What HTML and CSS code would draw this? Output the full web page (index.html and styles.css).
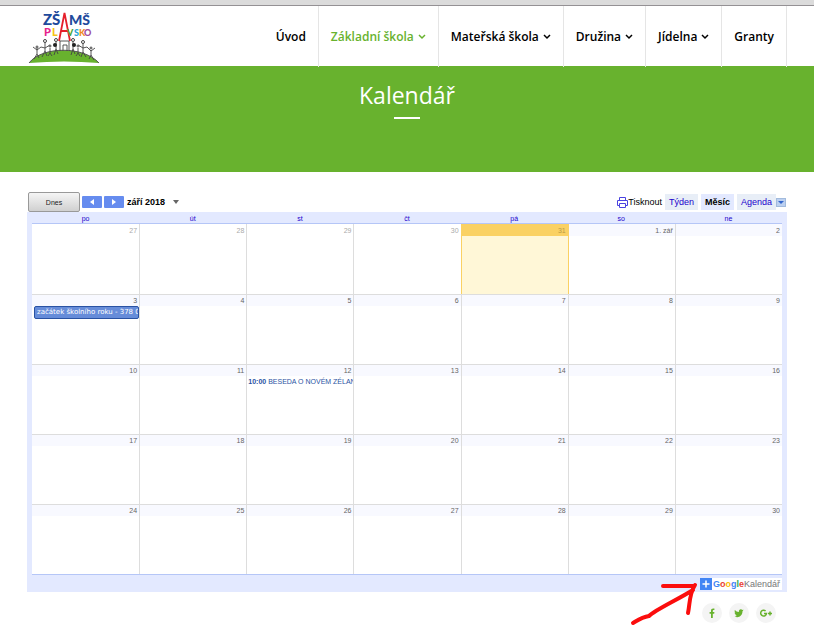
FILE: index.html
```html
<!DOCTYPE html>
<html lang="cs">
<head>
  <meta charset="UTF-8">
  <meta name="viewport" content="width=device-width, initial-scale=1.0">
  <title>Kalendář</title>
  <link rel="stylesheet" href="styles.css">
</head>
<body>
  <div class="topbar"></div>

  <header class="header">
    <div class="container header-inner">
      <a class="logo" href="#" aria-label="ZŠ a MŠ Plavsko">
        <svg width="72" height="56" viewBox="0 0 72 56">
          <path d="M1 54 C14 37 56 37 71 54 Q36 51 1 54Z" fill="#68b22e"/>
          <path d="M1 54 C14 37 56 37 71 54" fill="none" stroke="#555"/>
          <g fill="none" stroke="#444" stroke-width="0.900">
            <path d="M9 39v6l-3 5M9 45l2 4M5 38l4 3 4-3 4 1 5-3M17 33v9l-3 6M17 42l2 5M22 39v5l-2 3M22 44l2 3M28 33v7l-2 6M28 40l2 5"/>
            <path d="M63 41v5l-2 4M63 46l3 5M67 39l-4 3-4-4-4 1-5-3M55 34v9l-2 5M55 43l3 5M50 39v5l-2 3M50 44l2 3M45 33v7l-2 6M45 40l2 5"/>
            <path d="M32 42V32h9v10M35 42v-6h4v6"/>
          </g>
          <g fill="#fff" stroke="#444">
            <circle cx="9" cy="38" r="1"/><circle cx="17" cy="32" r="1.500"/><circle cx="22" cy="37" r="1"/><circle cx="28" cy="31" r="1.500"/>
            <circle cx="45" cy="31" r="1.500"/><circle cx="50" cy="37" r="1"/><circle cx="55" cy="33" r="1.500"/><circle cx="63" cy="39" r="1"/>
          </g>
          <circle cx="27" cy="36" r="2" fill="#222"/><circle cx="46" cy="36" r="2" fill="#222"/>
          <path d="M31 32L36.500 4L42 32M33 22h7" fill="none" stroke="#e5202b" stroke-width="1.800"/>
          <g class="logo-text">
            <text x="15" y="16" font-size="15" fill="#214a9c">ZŠ</text>
            <text x="41" y="16" font-size="14" fill="#214a9c">MŠ</text>
            <text x="16" y="27" font-size="11" fill="#e6238c">P</text>
            <text x="24" y="27" font-size="11" fill="#f6c416">L</text>
            <text x="39" y="27" font-size="9" fill="#4aa535">V</text>
            <text x="46" y="27" font-size="9" fill="#2ba5d8">S</text>
            <text x="51" y="27" font-size="9" fill="#f08a1d">K</text>
            <text x="56" y="27" font-size="9" fill="#a04a9c">O</text>
          </g>
        </svg>
      </a>
      <nav class="nav">
        <a href="#">Úvod</a>
        <a href="#" class="active">Základní škola <svg class="chevron" viewBox="0 0 8 6"><path d="M1 1l3 3 3-3"/></svg></a>
        <a href="#">Mateřská škola <svg class="chevron" viewBox="0 0 8 6"><path d="M1 1l3 3 3-3"/></svg></a>
        <a href="#">Družina <svg class="chevron" viewBox="0 0 8 6"><path d="M1 1l3 3 3-3"/></svg></a>
        <a href="#">Jídelna <svg class="chevron" viewBox="0 0 8 6"><path d="M1 1l3 3 3-3"/></svg></a>
        <a href="#">Granty</a>
      </nav>
    </div>
  </header>

  <section class="hero">
    <h1>Kalendář</h1>
  </section>

  <main class="container">
    <div class="toolbar">
      <button class="today-btn">Dnes</button>
      <button class="arrow-btn" aria-label="Předchozí"><svg width="4" height="6" viewBox="0 0 4 6"><path d="M4 0v6L0 3z" fill="#fff"/></svg></button>
      <button class="arrow-btn" aria-label="Další"><svg width="4" height="6" viewBox="0 0 4 6"><path d="M0 0v6l4-3z" fill="#fff"/></svg></button>
      <button class="month-btn">září 2018 <svg width="6" height="4" viewBox="0 0 6 4"><path d="M0 0h6L3 4z" fill="#666"/></svg></button>
      <div class="views">
        <a class="print" href="#"><svg width="11" height="11" viewBox="0 0 11 11" fill="none" stroke="#4a42e0"><path d="M2.500 3.500v-3h6v3M2.500 8.500h-2v-5h10v5h-2M2.500 6.500h6v4h-6z"/></svg>Tisknout</a>
        <a class="tab" href="#">Týden</a>
        <a class="tab current" href="#">Měsíc</a>
        <a class="tab" href="#">Agenda</a>
        <button class="more-btn" aria-label="Více"><svg width="6" height="3" viewBox="0 0 6 3"><path d="M0 0h6L3 3z" fill="#36c"/></svg></button>
      </div>
    </div>

    <div class="calendar">
      <table>
        <thead>
          <tr><th>po</th><th>út</th><th>st</th><th>čt</th><th>pá</th><th>so</th><th>ne</th></tr>
        </thead>
        <tbody>
          <tr>
            <td class="other"><div class="day">27</div></td>
            <td class="other"><div class="day">28</div></td>
            <td class="other"><div class="day">29</div></td>
            <td class="other"><div class="day">30</div></td>
            <td class="today"><div class="day">31</div></td>
            <td><div class="day">1. zář</div></td>
            <td><div class="day">2</div></td>
          </tr>
          <tr>
            <td><div class="day">3</div><a class="event event-all" href="#">začátek školního roku - 378 02</a></td>
            <td><div class="day">4</div></td>
            <td><div class="day">5</div></td>
            <td><div class="day">6</div></td>
            <td><div class="day">7</div></td>
            <td><div class="day">8</div></td>
            <td><div class="day">9</div></td>
          </tr>
          <tr>
            <td><div class="day">10</div></td>
            <td><div class="day">11</div></td>
            <td><div class="day">12</div><a class="event" href="#"><b>10:00</b> BESEDA O NOVÉM ZÉLANDU</a></td>
            <td><div class="day">13</div></td>
            <td><div class="day">14</div></td>
            <td><div class="day">15</div></td>
            <td><div class="day">16</div></td>
          </tr>
          <tr>
            <td><div class="day">17</div></td>
            <td><div class="day">18</div></td>
            <td><div class="day">19</div></td>
            <td><div class="day">20</div></td>
            <td><div class="day">21</div></td>
            <td><div class="day">22</div></td>
            <td><div class="day">23</div></td>
          </tr>
          <tr>
            <td><div class="day">24</div></td>
            <td><div class="day">25</div></td>
            <td><div class="day">26</div></td>
            <td><div class="day">27</div></td>
            <td><div class="day">28</div></td>
            <td><div class="day">29</div></td>
            <td><div class="day">30</div></td>
          </tr>
        </tbody>
      </table>
      <div class="calendar-footer">
        <a class="google" href="#">
          <span class="plus"><svg width="12" height="12" viewBox="0 0 12 12"><path d="M6 2.500v7M2.500 6h7" stroke="#fff" stroke-width="1.500"/></svg></span>
          <span class="google-name"><span class="blue">G</span><span class="red">o</span><span class="yellow">o</span><span class="blue">g</span><span class="green">l</span><span class="red">e</span></span>
          <span>Kalendář</span>
        </a>
        <svg class="pointer" width="70" height="48" viewBox="0 0 70 48"><path d="M4 43C9 40 13 37 20 36C26 30 48 20 64 10M34 6h31M66 5C60 14 61 24 59 33" fill="none" stroke="#fb0d0d" stroke-width="4" stroke-linecap="round" stroke-linejoin="round"/></svg>
      </div>
    </div>

    <div class="social">
      <a href="#" aria-label="Facebook"><svg width="12" height="12" viewBox="0 0 12 12"><path d="M5 11V6.700H3.600V5H5V3.800C5 2.300 5.800 1.500 7.200 1.500h1.200v1.600h-.8c-.6 0-.8.300-.8.800V5h1.600l-.2 1.700H6.800V11z"/></svg></a>
      <a href="#" aria-label="Twitter"><svg width="10" height="10" viewBox="1 1 10 10"><path d="M10.500 3.300l-1 1C9.500 8 7 10.200 4.300 10.200c-1 0-2-.3-2.800-.8 1 .1 1.900-.2 2.600-.7-.9 0-1.500-.6-1.800-1.300h.8C2.200 7.100 1.600 6.400 1.600 5.400l.8.200C1.500 4.900 1.400 3.800 1.900 3c1 1.200 2.400 1.900 4 2C5.600 3.500 6.600 2.300 7.900 2.300c.6 0 1.100.2 1.400.6l1.200-.4-.7 1z"/></svg></a>
      <a href="#" aria-label="Google Plus"><svg width="14" height="12" viewBox="0 0 14 12"><path d="M6.600 4A2.900 2.900 0 1 0 7.500 6.400H5M9 6.400h4M11 4.400v4" fill="none" stroke="#68b22e" stroke-width="1.500"/></svg></a>
    </div>
  </main>
</body>
</html>
```

FILE: styles.css
```css
* { box-sizing: border-box; }
body { margin: 0; background: #fff; color: #000; font-family: "Liberation Sans", Arial, sans-serif; font-size: 9px; }
a { text-decoration: none; color: inherit; }
button { font-family: inherit; font-size: inherit; padding: 0; border: 0; cursor: pointer; }
.container { max-width: 760px; margin: 0 auto; }

.topbar { height: 6px; background: #dbdbdb; border-bottom: 1px solid #949194; }

/* header */
.header-inner { display: flex; justify-content: space-between; height: 60px; }
.logo { padding-top: 3px; padding-left: 1px; }
.logo svg { display: block; }
.logo-text { font-family: Lato, sans-serif; font-weight: 900; }
.nav { display: flex; height: 61px; }
.nav a { display: flex; align-items: center; gap: 4px; padding: 0 12px; border-right: 1px solid #e5e5e5; font-family: "Open Sans", sans-serif; font-size: 12px; font-weight: 600; }
.nav .active { color: #68b22e; }
.chevron { width: 8px; height: 6px; fill: none; stroke: currentColor; stroke-width: 1.5; }

.hero { height: 106px; padding-top: 12px; background: #68b22e; text-align: center; color: #fff; }
.hero h1 { margin: 0; font-family: "Open Sans", sans-serif; font-size: 23px; font-weight: 400; line-height: 34px; }
.hero h1::after { content: ""; display: block; width: 26px; height: 2px; margin: 5px auto 0; background: #fff; }

/* toolbar */
.toolbar { display: flex; align-items: center; gap: 2px; height: 20px; margin-top: 20px; padding: 0 1px; }
.today-btn { width: 52px; height: 20px; border: 1px solid #999; border-radius: 2px; background: linear-gradient(#f5f5f5, #d0d0d0); font-size: 7px; color: #222; }
.arrow-btn { display: flex; align-items: center; justify-content: center; width: 20px; height: 12px; border-radius: 1px; background: #668cef; }
.month-btn { display: flex; align-items: center; gap: 8px; padding: 0 1px; background: none; font-weight: 700; color: #000; }
.views { display: flex; align-items: center; gap: 3px; height: 16px; margin-left: auto; }
.print { display: flex; align-items: center; }
.tab { height: 16px; padding: 0 4px; background: #e8eef7; line-height: 17px; color: #20c; }
.tab.current { background: #e3e9ff; color: #000; font-weight: 700; }
.more-btn { display: flex; align-items: center; justify-content: center; width: 10px; height: 9px; margin-left: -3px; border: 1px solid #a2bbdd; background: #bcd0f0; }

/* calendar */
.calendar { padding: 0 5px; background: #e3e9ff; }
.calendar table { width: 100%; table-layout: fixed; border-spacing: 0; border-bottom: 1px solid #b5c6f7; }
.calendar th { height: 12px; padding: 3px 0 0; border-bottom: 1px solid #b5c6f7; font-size: 7px; font-weight: 400; line-height: 8px; color: #20c; }
.calendar td { height: 70px; padding: 0; vertical-align: top; background: #fff; border-left: 1px solid #ddd; border-top: 1px solid #ddd; }
.calendar tbody tr:first-child td { border-top: 0; }
.calendar td:first-child { border-left: 0; }
.day { height: 11px; padding-right: 2px; background: #f8f9ff; font-size: 7px; line-height: 12px; text-align: right; color: #666; }
tr:first-child .day { height: 12px; line-height: 13px; }
.other .day { background: #fff; color: #aaa; }
.calendar td.today { background: #fff7d7; box-shadow: 0 1px #fad163; }
.calendar td.today, .calendar td.today + td { border-left-color: #fad163; }
.today .day { background: #fad163; color: #b99a45; }
.event { display: block; overflow: hidden; padding: 0 1px; font-size: 7px; line-height: 11px; white-space: nowrap; color: #2952a3; }
.event-all { height: 13px; margin-left: 2px; padding: 0 0 0 2px; border: 1px solid #2952a3; border-radius: 2px; background: #668cd9; font-family: "DejaVu Sans", sans-serif; color: #fff; }
.calendar-footer { position: relative; display: flex; justify-content: flex-end; padding: 3px 0 2px; }
.google { display: flex; align-items: center; height: 12px; padding-right: 2px; background: #fff; color: #777; }
.plus { width: 12px; height: 12px; margin-right: 1px; background: #4285f4; }
.plus svg { display: block; }
.google-name { font-weight: 700; }
.blue { color: #4285f4; }
.red { color: #ea4335; }
.yellow { color: #fbbc05; }
.green { color: #34a853; }
.pointer { position: absolute; top: 5px; right: 83px; }

.social { display: flex; justify-content: flex-end; gap: 7px; padding: 11px 11px; }
.social a { display: flex; align-items: center; justify-content: center; width: 20px; height: 20px; border-radius: 50%; background: #f4f4f4; }
.social svg { fill: #68b22e; }
```
